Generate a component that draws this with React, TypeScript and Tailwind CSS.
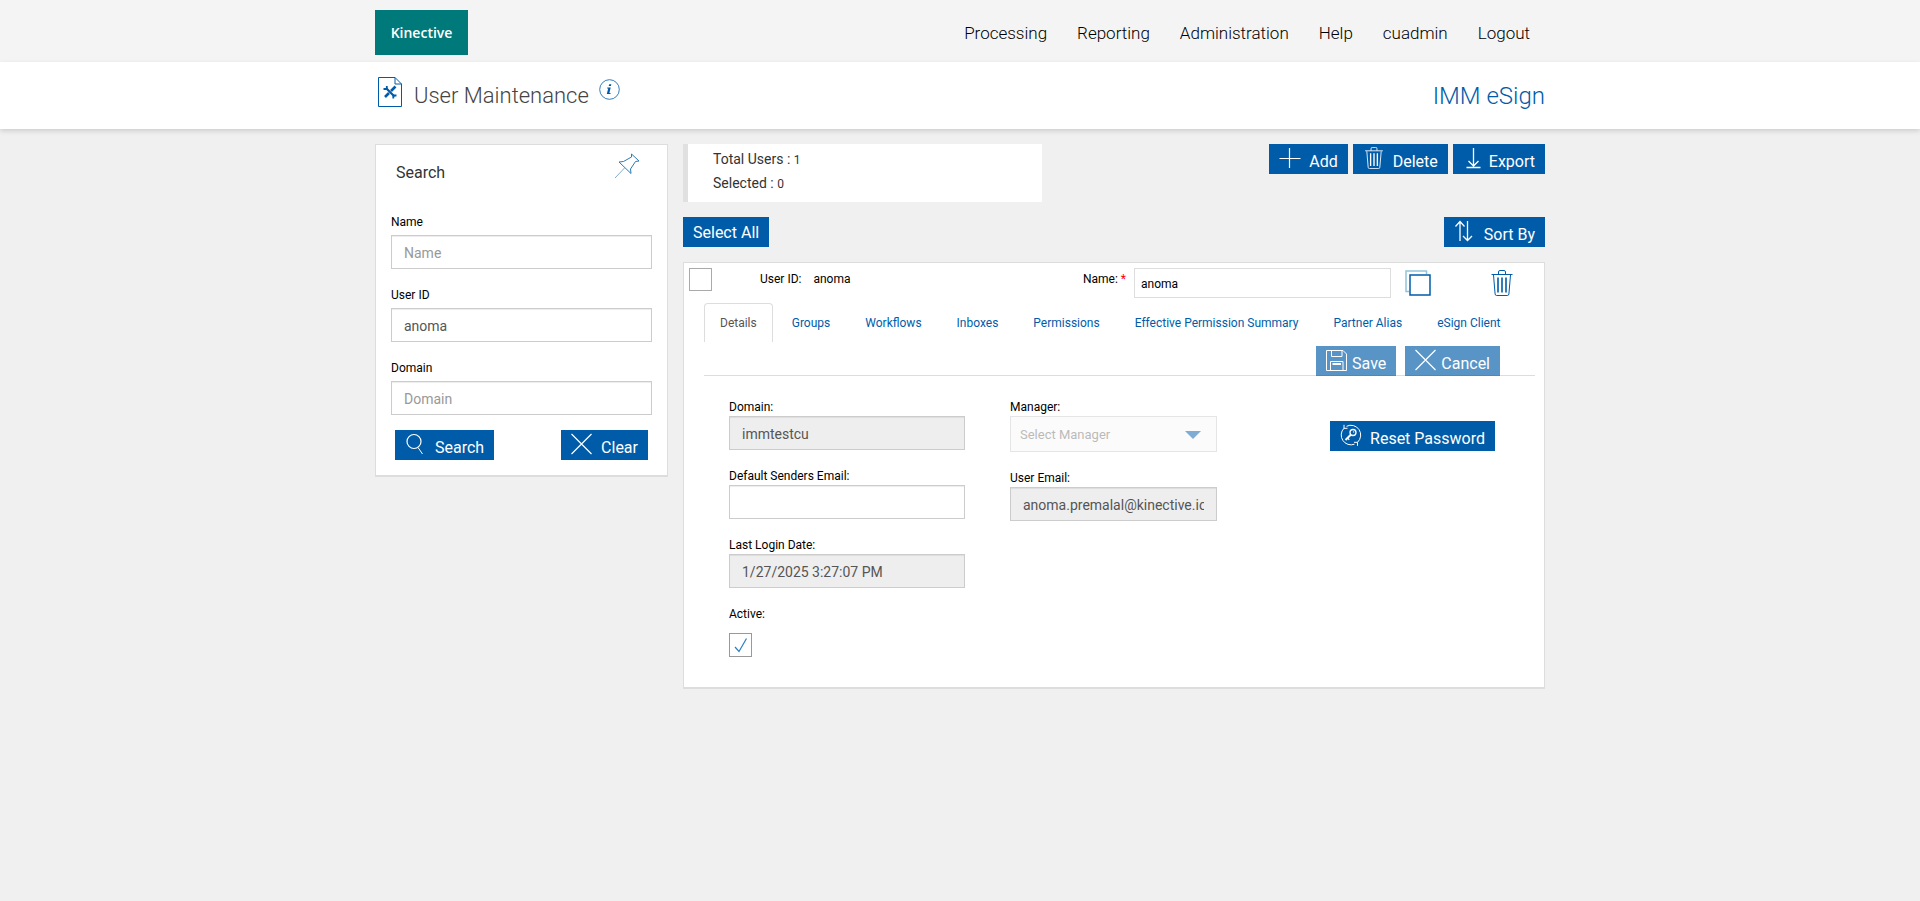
import React from 'react';
import clsx from 'clsx';

type IconProps = { className?: string };

const svgProps = {
  fill: 'none',
  stroke: 'currentColor',
  'aria-hidden': true,
} as const;

const PlusIcon = ({ className }: IconProps) => (
  <svg {...svgProps} viewBox="0 0 22 22" className={clsx('h-[22px] w-[22px]', className)}>
    <path d="M10.5 1v20M.5 11.5h21" strokeWidth="1.2" />
  </svg>
);

const TrashIcon = ({ className }: IconProps) => (
  <svg {...svgProps} viewBox="0 0 22 26" className={className}>
    <path d="M.5 4.5h21M7.5 4.5V2Q7.5.5 9 .5h4q1.5 0 1.5 1.5v2.5M2.5 5l1.6 19q.1 1.5 1.600 1.500h10.600q1.500 0 1.600-1.500L19.500 5" />
    <path d="M7 7.5v15M11 7.5v15M15 7.5v15" strokeWidth="1.6" />
  </svg>
);

const ExportIcon = ({ className }: IconProps) => (
  <svg {...svgProps} viewBox="0 0 22 22" className={clsx('h-[22px] w-[22px]', className)}>
    <path d="M10.5 1v18M5.500 14l5 5 5-5M3.500 20.500h14" strokeWidth="1.3" />
  </svg>
);

const SortIcon = ({ className }: IconProps) => (
  <svg {...svgProps} viewBox="0 0 22 22" className={clsx('h-[22px] w-[22px]', className)}>
    <path d="M6 21V2M1.500 6.500L6 1.500l4.500 5M13.500 1v19M9 16l4.500 4.500 4.500-4.500" strokeWidth="1.3" />
  </svg>
);

const SearchIcon = ({ className }: IconProps) => (
  <svg {...svgProps} viewBox="0 0 22 22" className={clsx('h-[22px] w-[22px]', className)}>
    <circle cx="9" cy="8.5" r="7" strokeWidth="1.2" />
    <path d="M13 14.5l4.500 6.500" />
  </svg>
);

const CloseIcon = ({ className }: IconProps) => (
  <svg {...svgProps} viewBox="0 0 22 22" className={clsx('h-[22px] w-[22px]', className)}>
    <path d="M.5 1l20 20M20.500 1l-20 20" strokeWidth="1.2" />
  </svg>
);

const SaveIcon = ({ className }: IconProps) => (
  <svg {...svgProps} viewBox="0 0 22 22" className={clsx('h-[22px] w-[22px]', className)}>
    <path d="M.5 1.500h16.500l3.500 3.500v16.500H.5zM5.500 1.500v6h10.500v-6M4.500 21.500v-9h12.500v9M6.500 14.500h8.500M6.500 15.500h8.500" />
  </svg>
);

const ResetIcon = ({ className }: IconProps) => (
  <svg {...svgProps} viewBox="0 0 22 22" className={clsx('h-[22px] w-[22px]', className)}>
    <path d="M6.500 2.300A9.800 9.800 0 0 1 17.500 18.300M14.500 20.200A9.800 9.800 0 0 1 4 4.200" />
    <path d="M4 .8v3.500h3.500M17.500 21.800v-3.500H14" />
    <circle cx="13" cy="8.500" r="3" strokeWidth="1.300" />
    <circle cx="13.600" cy="7.900" r=".7" fill="currentColor" stroke="none" />
    <path d="M11 10.500l-5.500 5.500" strokeWidth="2" />
    <path d="M7.500 14l1.800 1.800" strokeWidth="1.200" />
  </svg>
);

const PinIcon = ({ className }: IconProps) => (
  <svg {...svgProps} viewBox="0 0 26 26" className={className}>
    <path d="M17.500 1l7.500 7-3.500.5-5 7.500.5 4.500L5 9l4.500-.5 8-4.500z" />
    <path d="M10.500 15L1 25" strokeOpacity=".6" />
  </svg>
);

const CopyIcon = ({ className }: IconProps) => (
  <svg {...svgProps} viewBox="0 0 26 26" className={className}>
    <path d="M4 21.500H1V1h20.500v3" stroke="#93c3da" strokeWidth="1.500" />
    <path d="M5 5h20v20H5z" strokeWidth="1.500" />
  </svg>
);

const PageIcon = ({ className }: IconProps) => (
  <svg {...svgProps} viewBox="0 0 24 30" className={className}>
    <path d="M.5.500h16.500l6.500 6.500v22.500H.5zM17 .5V7h6.500" />
    <path d="M8 11l8.500 8.500" strokeWidth="2.200" />
    <path d="M17.500 9.500L13 14M11 16l-4 4" strokeWidth="2.600" />
    <path d="M5.500 12h3.300V9M18.500 18.500h-3.200v3" strokeWidth="1.800" />
  </svg>
);

const InfoIcon = ({ className }: IconProps) => (
  <svg viewBox="0 0 21 21" className={className} aria-hidden="true">
    <circle cx="10.5" cy="10.5" r="9.8" fill="none" stroke="currentColor" strokeWidth=".8" />
    <path d="M10.200 5.200h2.200l-.5 1.900H9.700zM8.300 8.600h3.400l-1.300 5.300h1.300l-.3 1H7.800l1.400-5.300H8z" fill="currentColor" />
  </svg>
);

interface ActionButtonProps {
  icon?: React.ReactNode;
  label: string;
  tight?: boolean;
  faded?: boolean;
}

const ActionButton: React.FC<ActionButtonProps> = ({ icon, label, tight, faded }) => (
  <button
    type="button"
    disabled={faded}
    className={clsx(
      'flex h-[30px] items-start bg-[#005ca9] px-[10px] pt-[3px] text-base leading-6 whitespace-nowrap text-white',
      faded && 'opacity-65',
      tight ? 'gap-1' : 'gap-2'
    )}
  >
    {icon}
    <span className={icon ? 'pt-[3px]' : 'pt-px'}>{label}</span>
  </button>
);

interface FieldProps {
  id: string;
  label: string;
  value?: string;
  placeholder?: string;
  disabled?: boolean;
  search?: boolean;
}

const Field: React.FC<FieldProps> = ({ id, label, value, placeholder, disabled, search }) => (
  <div>
    <label htmlFor={id} className={clsx('block text-xs leading-4', search ? 'mb-[5px]' : 'mb-px')}>
      {label}
    </label>
    <input
      id={id}
      type="text"
      defaultValue={value}
      placeholder={placeholder}
      disabled={disabled}
      className="block h-[34px] w-full border border-[#ccc] bg-white px-3 pt-0.5 text-sm text-[#555] shadow-[inset_0_1px_1px_rgba(0,0,0,0.075)] placeholder:text-[#999] disabled:bg-[#eee]"
    />
  </div>
);

const navItems = ['Processing', 'Reporting', 'Administration', 'Help', 'cuadmin', 'Logout'];

const tabs = [
  'Details',
  'Groups',
  'Workflows',
  'Inboxes',
  'Permissions',
  'Effective Permission Summary',
  'Partner Alias',
  'eSign Client',
];

const Header = () => (
  <header>
    <div className="bg-[#f4f4f4]">
      <div className="mx-auto flex h-[62px] max-w-[1170px] items-start justify-between">
        <a
          href="#"
          className="mt-[10px] flex h-[45px] w-[93px] items-center justify-center bg-[#00797b] font-['Open_Sans',sans-serif] text-sm font-semibold text-white"
        >
          Kinective
        </a>
        <nav className="flex gap-[30px] pt-[21px] pr-[15px] text-[17px] leading-6 font-light text-black">
          {navItems.map((item) => (
            <a key={item} href="#">
              {item}
            </a>
          ))}
        </nav>
      </div>
    </div>
    <div className="relative bg-white shadow-[0_2px_5px_rgba(0,0,0,0.15)]">
      <div className="mx-auto flex h-[67px] max-w-[1170px] items-start justify-between">
        <div className="flex items-start pt-[15px] pl-[3px]">
          <PageIcon className="h-[30px] w-6 text-[#005ca9]" />
          <h1 className="ml-3 pt-[3px] text-[22px] leading-8 font-light text-[#444]">User Maintenance</h1>
          <button type="button" aria-label="Page information" className="ml-2.5 pt-0.5 text-[#005ca9]">
            <InfoIcon className="h-[21px] w-[21px]" />
          </button>
        </div>
        <p className="pt-[18px] text-2xl leading-8 font-light text-[#005ca9]">IMM eSign</p>
      </div>
    </div>
  </header>
);

const SearchPanel = () => (
  <aside className="w-[293px] shrink-0 border border-b-2 border-[#ddd] bg-white px-[15px] pb-[15px]">
    <div className="flex items-start justify-between pt-2 pr-3 pl-[5px]">
      <h2 className="pt-2 text-base leading-6 text-[#333]">Search</h2>
      <button type="button" aria-label="Pin search panel" className="text-[#2a7ab5]">
        <PinIcon className="h-[26px] w-[26px]" />
      </button>
    </div>
    <form className="mt-[29px] space-y-[18px]">
      <Field search id="search-name" label="Name" placeholder="Name" />
      <Field search id="search-user" label="User ID" value="anoma" />
      <Field search id="search-domain" label="Domain" placeholder="Domain" />
    </form>
    <div className="mt-[15px] flex justify-between px-1">
      <ActionButton icon={<SearchIcon />} label="Search" />
      <ActionButton icon={<CloseIcon />} label="Clear" />
    </div>
  </aside>
);

const UserCard = () => (
  <article className="mt-[15px] border border-b-2 border-[#ddd] bg-white pb-[30px] text-xs text-black">
    <div className="flex h-10 items-start pt-[5px] pl-[5px]">
      <input
        type="checkbox"
        aria-label="Select user anoma"
        className="h-[23px] w-[23px] appearance-none border border-[#aaa] bg-white"
      />
      <dl className="ml-12 flex gap-3 pt-[3px] leading-4">
        <dt>User ID:</dt>
        <dd>anoma</dd>
      </dl>
      <label htmlFor="user-name" className="ml-auto pt-[3px] leading-4">
        Name: <span className="text-[#f00]">*</span>
      </label>
      <input
        id="user-name"
        type="text"
        defaultValue="anoma"
        className="ml-2 h-[30px] w-[257px] border border-[#ddd] px-1.5 pt-0.5 text-xs"
      />
      <button type="button" aria-label="Copy user" className="ml-[14px] pt-0.5 text-[#005ca9]">
        <CopyIcon className="h-[26px] w-[26px]" />
      </button>
      <button type="button" aria-label="Delete user" className="mr-[31px] ml-[60px] pt-0.5 text-[#005ca9]">
        <TrashIcon className="h-[26px] w-[22px]" />
      </button>
    </div>

    <div className="mr-[9px] ml-5 border-b border-[#ddd]">
      <div role="tablist" className="flex gap-[3px] leading-5">
        {tabs.map((tab, i) => (
          <button
            key={tab}
            type="button"
            role="tab"
            aria-selected={i === 0}
            className={clsx(
              'h-[39px] rounded-t border border-b-0 px-[15px] whitespace-nowrap',
              i === 0 ? 'border-[#ddd] text-[#555]' : 'border-transparent text-[#005ca9]'
            )}
          >
            {tab}
          </button>
        ))}
      </div>
      <div className="mt-1 -mb-px flex justify-end gap-[9px] pr-[35px]">
        <ActionButton tight faded icon={<SaveIcon />} label="Save" />
        <ActionButton tight faded icon={<CloseIcon />} label="Cancel" />
      </div>
    </div>

    <div className="flex items-start pt-[23px] pr-[49px] pl-[45px]">
      <div className="w-[236px] space-y-[18px]">
        <Field disabled id="domain" label="Domain:" value="immtestcu" />
        <Field id="sender-email" label="Default Senders Email:" />
        <Field disabled id="last-login" label="Last Login Date:" value="1/27/2025 3:27:07 PM" />
        <div>
          <label htmlFor="active" className="block leading-4">
            Active:
          </label>
          <div className="relative mt-[11px] h-6 w-[23px]">
            <input
              id="active"
              type="checkbox"
              defaultChecked
              className="block h-6 w-[23px] appearance-none border border-[#999] bg-white"
            />
            <svg
              viewBox="0 0 23 24"
              className="pointer-events-none absolute inset-0 h-6 w-[23px] text-[#2a7fc0]"
              fill="none"
              stroke="currentColor"
            >
              <path d="M6 14l4 4.500L17.500 5.500" strokeWidth="1.200" />
            </svg>
          </div>
        </div>
      </div>
      <div className="ml-[45px] w-[207px] space-y-[18px]">
        <div>
          <label htmlFor="manager" className="mb-px block leading-4">
            Manager:
          </label>
          <div className="relative opacity-50">
            <select
              id="manager"
              disabled
              className="block h-9 w-full appearance-none border border-[#ccc] bg-[#f9f9f9] px-[9px] pt-0.5 text-[13px] text-[#777]"
            >
              <option>Select Manager</option>
            </select>
            <svg viewBox="0 0 16 8" className="absolute top-[15px] right-4 h-2 w-4 fill-[#005ca9]">
              <path d="M0 0h16L8 8z" />
            </svg>
          </div>
        </div>
        <Field disabled id="user-email" label="User Email:" value="anoma.premalal@kinective.io" />
      </div>
      <div className="mt-[22px] ml-auto">
        <ActionButton icon={<ResetIcon />} label="Reset Password" />
      </div>
    </div>
  </article>
);

export default function App() {
  return (
    <div className="min-h-screen bg-[#f0f0f0] font-[Roboto,sans-serif]">
      <Header />
      <main className="mx-auto flex max-w-[1170px] items-start gap-[15px] pt-[15px]">
        <SearchPanel />
        <section className="min-w-0 flex-1">
          <div className="flex items-start justify-between">
            <div className="h-[58px] w-[359px] border-l-[5px] border-[#e0e0e0] bg-white pt-[3px] pl-[25px] text-sm leading-6 text-[#333]">
              <p>
                Total Users : <span className="text-xs">1</span>
              </p>
              <p>
                Selected : <span className="text-xs">0</span>
              </p>
            </div>
            <div className="flex gap-[5px]">
              <ActionButton icon={<PlusIcon />} label="Add" />
              <ActionButton icon={<TrashIcon className="h-[22px] w-[22px]" />} label="Delete" />
              <ActionButton tight icon={<ExportIcon />} label="Export" />
            </div>
          </div>
          <div className="mt-[15px] flex justify-between">
            <ActionButton label="Select All" />
            <ActionButton icon={<SortIcon />} label="Sort By" />
          </div>
          <UserCard />
        </section>
      </main>
    </div>
  );
}
